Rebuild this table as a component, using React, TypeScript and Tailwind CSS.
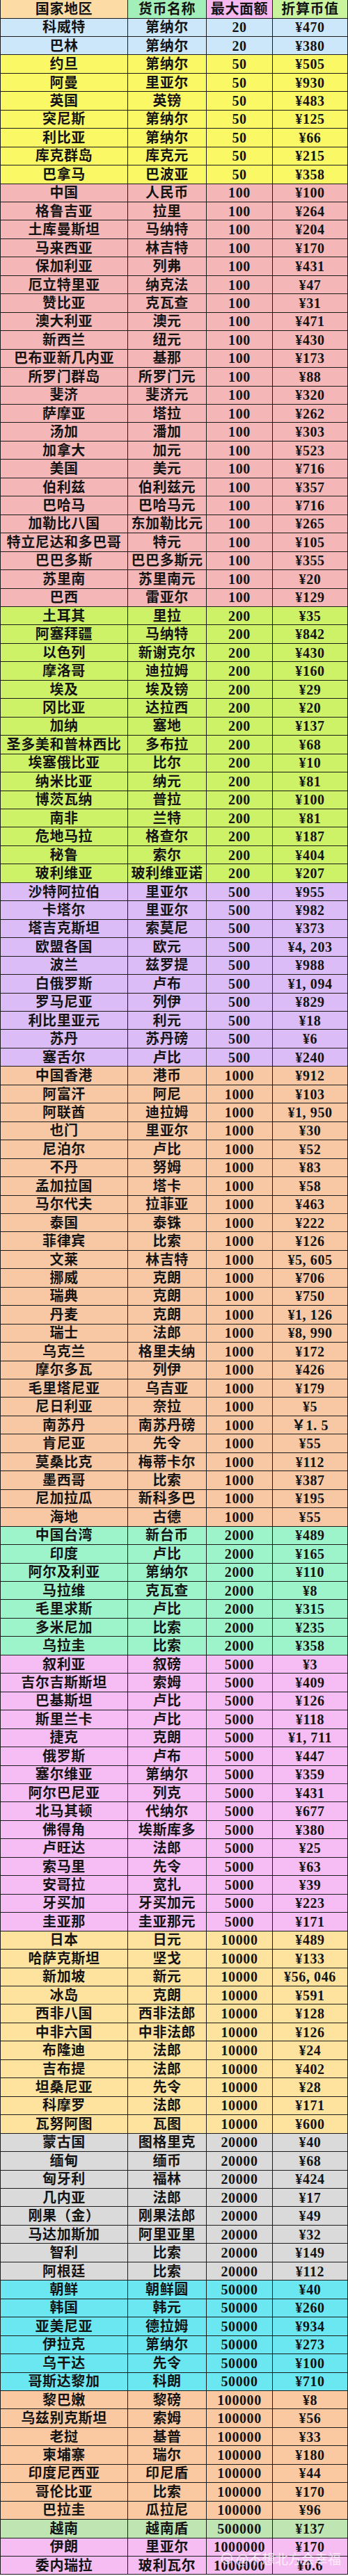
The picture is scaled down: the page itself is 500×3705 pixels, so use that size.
const HEAD = [
  { t: '国家地区', bg: 'bg-[#fcdca4]' },
  { t: '货币名称', bg: 'bg-[#a3efb9]' },
  { t: '最大面额', bg: 'bg-[#f6b8ef]' },
  { t: '折算币值', bg: 'bg-[#c9f39d]' },
];

const GROUPS: { bg: string; rows: string[] }[] = [
  {
    bg: 'bg-[#cde7fa]',
    rows: ['科威特|第纳尔|20|¥470', '巴林|第纳尔|20|¥380'],
  },
  {
    bg: 'bg-[#fbf866]',
    rows: [
      '约旦|第纳尔|50|¥505',
      '阿曼|里亚尔|50|¥930',
      '英国|英镑|50|¥483',
      '突尼斯|第纳尔|50|¥125',
      '利比亚|第纳尔|50|¥66',
      '库克群岛|库克元|50|¥215',
      '巴拿马|巴波亚|50|¥358',
    ],
  },
  {
    bg: 'bg-[#f4b6b6]',
    rows: [
      '中国|人民币|100|¥100',
      '格鲁吉亚|拉里|100|¥264',
      '土库曼斯坦|马纳特|100|¥204',
      '马来西亚|林吉特|100|¥170',
      '保加利亚|列弗|100|¥431',
      '厄立特里亚|纳克法|100|¥47',
      '赞比亚|克瓦查|100|¥31',
      '澳大利亚|澳元|100|¥471',
      '新西兰|纽元|100|¥430',
      '巴布亚新几内亚|基那|100|¥173',
      '所罗门群岛|所罗门元|100|¥88',
      '斐济|斐济元|100|¥320',
      '萨摩亚|塔拉|100|¥262',
      '汤加|潘加|100|¥303',
      '加拿大|加元|100|¥523',
      '美国|美元|100|¥716',
      '伯利兹|伯利兹元|100|¥357',
      '巴哈马|巴哈马元|100|¥716',
      '加勒比八国|东加勒比元|100|¥265',
      '特立尼达和多巴哥|特元|100|¥105',
      '巴巴多斯|巴巴多斯元|100|¥355',
      '苏里南|苏里南元|100|¥20',
      '巴西|雷亚尔|100|¥129',
    ],
  },
  {
    bg: 'bg-[#cdf268]',
    rows: [
      '土耳其|里拉|200|¥35',
      '阿塞拜疆|马纳特|200|¥842',
      '以色列|新谢克尔|200|¥430',
      '摩洛哥|迪拉姆|200|¥160',
      '埃及|埃及镑|200|¥29',
      '冈比亚|达拉西|200|¥20',
      '加纳|塞地|200|¥137',
      '圣多美和普林西比|多布拉|200|¥68',
      '埃塞俄比亚|比尔|200|¥10',
      '纳米比亚|纳元|200|¥81',
      '博茨瓦纳|普拉|200|¥100',
      '南非|兰特|200|¥81',
      '危地马拉|格查尔|200|¥187',
      '秘鲁|索尔|200|¥404',
      '玻利维亚|玻利维亚诺|200|¥207',
    ],
  },
  {
    bg: 'bg-[#dcbcf7]',
    rows: [
      '沙特阿拉伯|里亚尔|500|¥955',
      '卡塔尔|里亚尔|500|¥982',
      '塔吉克斯坦|索莫尼|500|¥373',
      '欧盟各国|欧元|500|¥4, 203',
      '波兰|兹罗提|500|¥988',
      '白俄罗斯|卢布|500|¥1, 094',
      '罗马尼亚|列伊|500|¥829',
      '利比里亚元|利元|500|¥18',
      '苏丹|苏丹磅|500|¥6',
      '塞舌尔|卢比|500|¥240',
    ],
  },
  {
    bg: 'bg-[#f8c8a4]',
    rows: [
      '中国香港|港币|1000|¥912',
      '阿富汗|阿尼|1000|¥103',
      '阿联酋|迪拉姆|1000|¥1, 950',
      '也门|里亚尔|1000|¥30',
      '尼泊尔|卢比|1000|¥52',
      '不丹|努姆|1000|¥83',
      '孟加拉国|塔卡|1000|¥58',
      '马尔代夫|拉菲亚|1000|¥463',
      '泰国|泰铢|1000|¥222',
      '菲律宾|比索|1000|¥126',
      '文莱|林吉特|1000|¥5, 605',
      '挪威|克朗|1000|¥706',
      '瑞典|克朗|1000|¥750',
      '丹麦|克朗|1000|¥1, 126',
      '瑞士|法郎|1000|¥8, 990',
      '乌克兰|格里夫纳|1000|¥172',
      '摩尔多瓦|列伊|1000|¥426',
      '毛里塔尼亚|乌吉亚|1000|¥179',
      '尼日利亚|奈拉|1000|¥5',
      '南苏丹|南苏丹磅|1000|￥1. 5',
      '肯尼亚|先令|1000|¥55',
      '莫桑比克|梅蒂卡尔|1000|¥112',
      '墨西哥|比索|1000|¥387',
      '尼加拉瓜|新科多巴|1000|¥195',
      '海地|古德|1000|¥55',
    ],
  },
  {
    bg: 'bg-[#9df4cb]',
    rows: [
      '中国台湾|新台币|2000|¥489',
      '印度|卢比|2000|¥165',
      '阿尔及利亚|第纳尔|2000|¥110',
      '马拉维|克瓦查|2000|¥8',
      '毛里求斯|卢比|2000|¥315',
      '多米尼加|比索|2000|¥235',
      '乌拉圭|比索|2000|¥358',
    ],
  },
  {
    bg: 'bg-[#f6bcf4]',
    rows: [
      '叙利亚|叙磅|5000|¥3',
      '吉尔吉斯斯坦|索姆|5000|¥409',
      '巴基斯坦|卢比|5000|¥126',
      '斯里兰卡|卢比|5000|¥118',
      '捷克|克朗|5000|¥1, 711',
      '俄罗斯|卢布|5000|¥447',
      '塞尔维亚|第纳尔|5000|¥359',
      '阿尔巴尼亚|列克|5000|¥431',
      '北马其顿|代纳尔|5000|¥677',
      '佛得角|埃斯库多|5000|¥380',
      '卢旺达|法郎|5000|¥25',
      '索马里|先令|5000|¥63',
      '安哥拉|宽扎|5000|¥39',
      '牙买加|牙买加元|5000|¥223',
      '圭亚那|圭亚那元|5000|¥171',
    ],
  },
  {
    bg: 'bg-[#fde39e]',
    rows: [
      '日本|日元|10000|¥489',
      '哈萨克斯坦|坚戈|10000|¥133',
      '新加坡|新元|10000|¥56, 046',
      '冰岛|克朗|10000|¥591',
      '西非八国|西非法郎|10000|¥128',
      '中非六国|中非法郎|10000|¥126',
      '布隆迪|法郎|10000|¥24',
      '吉布提|法郎|10000|¥402',
      '坦桑尼亚|先令|10000|¥28',
      '科摩罗|法郎|10000|¥171',
      '瓦努阿图|瓦图|10000|¥600',
    ],
  },
  {
    bg: 'bg-[#dadada]',
    rows: [
      '蒙古国|图格里克|20000|¥40',
      '缅甸|缅币|20000|¥68',
      '匈牙利|福林|20000|¥424',
      '几内亚|法郎|20000|¥17',
      '刚果（金）|刚果法郎|20000|¥49',
      '马达加斯加|阿里亚里|20000|¥32',
      '智利|比索|20000|¥149',
      '阿根廷|比索|20000|¥112',
    ],
  },
  {
    bg: 'bg-[#6ae7f1]',
    rows: [
      '朝鲜|朝鲜圆|50000|¥40',
      '韩国|韩元|50000|¥260',
      '亚美尼亚|德拉姆|50000|¥934',
      '伊拉克|第纳尔|50000|¥273',
      '乌干达|先令|50000|¥100',
      '哥斯达黎加|科朗|50000|¥710',
    ],
  },
  {
    bg: 'bg-[#fac9a2]',
    rows: [
      '黎巴嫩|黎磅|100000|¥8',
      '乌兹别克斯坦|索姆|100000|¥56',
      '老挝|基普|100000|¥33',
      '柬埔寨|瑞尔|100000|¥180',
      '印度尼西亚|印尼盾|100000|¥44',
      '哥伦比亚|比索|100000|¥170',
      '巴拉圭|瓜拉尼|100000|¥96',
    ],
  },
  {
    bg: 'bg-[#bfe5b2]',
    rows: ['越南|越南盾|500000|¥137'],
  },
  {
    bg: 'bg-[#f5bdf2]',
    rows: ['伊朗|里亚尔|1000000|¥170', '委内瑞拉|玻利瓦尔|1000000|¥0.6'],
  },
];

const COLS = 'grid grid-cols-[183px_113px_95px_1fr]';
const CELL = 'flex items-center justify-center whitespace-nowrap border-r border-[#1b1b1b] last:border-r-0';

function Row({ cells, bg }: { cells: string[]; bg: string }) {
  return (
    <div className={`${COLS} ${bg} h-[26.46px] border-b-[1.5px] border-[#1b1b1b]`}>
      {cells.map((c, i) => (
        <div key={i} className={CELL}>
          {c}
        </div>
      ))}
    </div>
  );
}

export default function App() {
  return (
    <div
      className="relative w-[500px] bg-white text-[20px] leading-none font-bold tracking-[0.6px] text-[#141414]"
      style={{ fontFamily: '"Liberation Serif", "Noto Sans CJK SC", serif' }}
    >
      <div className="border-x border-[#1b1b1b]">
        <div className={`${COLS} h-[26.5px] border-b-[1.5px] border-[#1b1b1b]`}>
          {HEAD.map(h => (
            <div key={h.t} className={`${CELL} ${h.bg}`}>
              {h.t}
            </div>
          ))}
        </div>
        {GROUPS.map(g =>
          g.rows.map(r => <Row key={r} cells={r.split('|')} bg={g.bg} />)
        )}
      </div>

      {/* watermark */}
      <div className="absolute right-[10px] bottom-[14px] flex items-center gap-1 text-white/75 text-[19px] font-normal tracking-normal pointer-events-none">
        <svg width="18" height="18" viewBox="0 0 18 18" fill="none" stroke="currentColor" strokeWidth="1.6">
          <circle cx="9" cy="9" r="7.5" />
          <path d="M5 10c1.5-3 6.5-3 8 0M6.5 12.5h5" />
        </svg>
        <span style={{ fontFamily: '"Noto Sans CJK SC", sans-serif' }}>@不想北方会幸福</span>
      </div>
    </div>
  );
}
